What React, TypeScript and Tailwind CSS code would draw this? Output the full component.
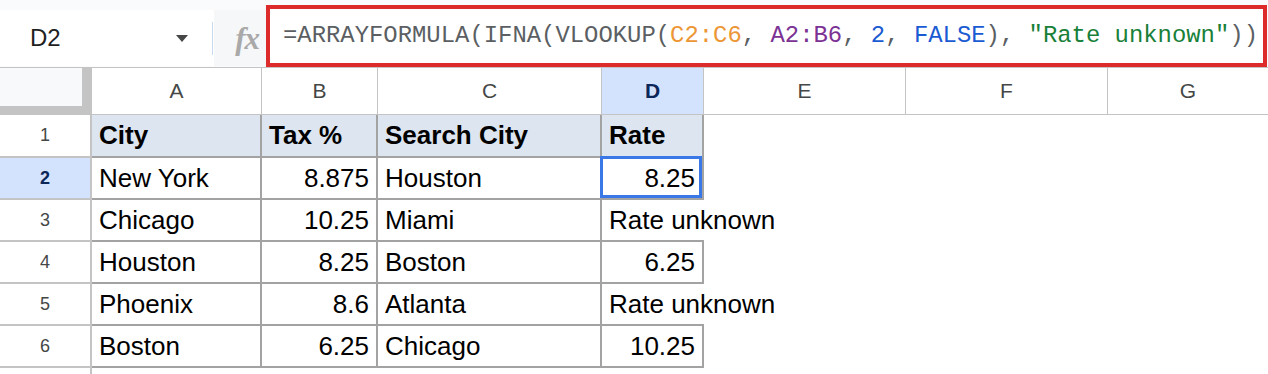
import React from 'react';

type Row = { cells: string[]; bold?: boolean };

const rows: Row[] = [
  { cells: ['City', 'Tax %', 'Search City', 'Rate'], bold: true },
  { cells: ['New York', '8.875', 'Houston', '8.25'] },
  { cells: ['Chicago', '10.25', 'Miami', 'Rate unknown'] },
  { cells: ['Houston', '8.25', 'Boston', '6.25'] },
  { cells: ['Phoenix', '8.6', 'Atlanta', 'Rate unknown'] },
  { cells: ['Boston', '6.25', 'Chicago', '10.25'] },
];

const colW = ['w-[170px]', 'w-[116px]', 'w-[224px]', 'w-[102px]'];
const isNum = (v: string) => /^[\d.]+$/.test(v);

function FormulaText() {
  const gray = 'text-[#5b5f63]';
  return (
    <div className="whitespace-pre font-['Liberation_Mono',monospace] text-[23.9px] leading-none">
      <span className={gray}>=ARRAYFORMULA(IFNA(VLOOKUP(</span>
      <span className="text-[#ec9636]">C2:C6</span>
      <span className={gray}>, </span>
      <span className="text-[#7b3294]">A2:B6</span>
      <span className={gray}>, </span>
      <span className="text-[#1a5bd3]">2</span>
      <span className={gray}>, </span>
      <span className="text-[#1a5bd3]">FALSE</span>
      <span className={gray}>), </span>
      <span className="text-[#188038]">"Rate unknown"</span>
      <span className={gray}>))</span>
    </div>
  );
}

function ColHeader({ label, active, w }: { label: string; active?: boolean; w: string }) {
  return (
    <div
      className={`${w} h-full shrink-0 border-r border-[#c4c4c4] flex items-center justify-center text-[21px] ${
        active ? 'bg-[#d3e3fd] font-bold text-[#0b2659]' : 'text-[#444746]'
      }`}
    >
      {label}
    </div>
  );
}

export default function App() {
  return (
    <div className="w-[1268px] h-[374px] overflow-hidden bg-white font-['Liberation_Sans',Arial,sans-serif]">
      {/* formula bar */}
      <div className="flex h-[67px] bg-[#f9fbfd]">
        <div className="mt-[10px] h-[56px] w-[212px] bg-white flex items-center pl-[30px] pr-[24px]">
          <span className="text-[24px] text-[#1f1f1f]">D2</span>
          <span className="ml-auto w-0 h-0 border-l-[6px] border-r-[6px] border-t-[7px] border-l-transparent border-r-transparent border-t-[#444746]" />
        </div>
        <div className="mt-[10px] h-[56px] w-[2px] bg-white flex items-center">
          <div className="w-px h-[33px] bg-[#c9d9ef]" />
        </div>
        <div className="mt-[10px] h-[56px] w-[52px] bg-[#f6f7f8] flex items-center justify-end pr-[7px]">
          <span className="font-['Liberation_Serif',serif] italic font-bold text-[31px] leading-none text-[#a9a9a9] tracking-[-1px]">fx</span>
        </div>
        <div className="mt-[5px] h-[62px] flex-1 mr-[1px] border-[4px] border-[#dd2a2a] bg-white flex items-center pl-[13px]">
          <FormulaText />
        </div>
      </div>

      {/* column headers */}
      <div className="flex h-[48px] border-t border-b border-[#c4c4c4]">
        <div className="w-[92px] h-full shrink-0 bg-[#c4c4c4]">
          <div className="w-[82px] h-[38px] bg-[#f8f9fa]" />
        </div>
        <ColHeader label="A" w="w-[170px]" />
        <ColHeader label="B" w="w-[116px]" />
        <ColHeader label="C" w="w-[224px]" />
        <ColHeader label="D" w="w-[102px]" active />
        <ColHeader label="E" w="w-[202px]" />
        <ColHeader label="F" w="w-[202px]" />
        <div className="flex-1 h-full flex items-center justify-center text-[21px] text-[#444746]">G</div>
      </div>

      {/* grid */}
      {rows.map((row, r) => (
        <div key={r} className={`flex ${r === 0 ? 'h-[43px]' : 'h-[42px]'}`}>
          <div
            className={`w-[92px] shrink-0 border-r-2 border-b-2 border-[#c4c4c4] flex items-center justify-center text-[18px] ${
              r === 1 ? 'bg-[#d3e3fd] font-bold text-[#0b2659]' : 'text-[#444746]'
            }`}
          >
            {r + 1}
          </div>
          {row.cells.map((v, c) => {
            const overflow = c === 3 && !isNum(v) && !row.bold;
            return (
              <div
                key={c}
                className={`${colW[c]} shrink-0 relative border-b-2 ${overflow ? '' : 'border-r-2'} border-[#a3a3a3] px-[7px] flex items-center text-[26px] text-black whitespace-nowrap ${
                  row.bold ? 'bg-[#dce5f0] font-bold' : ''
                } ${!row.bold && isNum(v) ? 'justify-end' : ''}`}
              >
                {v}
                {r === 1 && c === 3 && (
                  <div className="absolute top-[-2px] left-[-2px] right-0 bottom-0 border-[3px] border-[#3b78e7]" />
                )}
              </div>
            );
          })}
          <div className="flex-1" />
        </div>
      ))}
      <div className="flex h-[20px]">
        <div className="w-[92px] shrink-0 border-r-2 border-[#c4c4c4]" />
        <div className="flex-1" />
      </div>
    </div>
  );
}
